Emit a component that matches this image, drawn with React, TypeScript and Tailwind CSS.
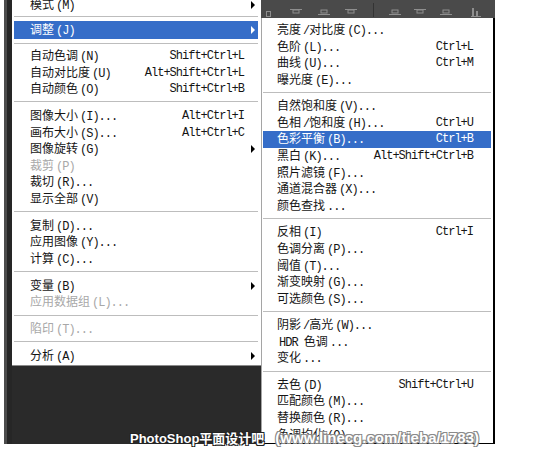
type Row =
  | { sep: true; h?: number; line?: number }
  | { label: string; sc?: string; arrow?: boolean; off?: boolean; hl?: boolean };

const leftMenu: Row[] = [
  { label: "模式(M)", arrow: true },
  { sep: true, h: 7.4, line: 2 },
  { label: "调整(J)", arrow: true, hl: true },
  { sep: true, h: 8.7, line: 4 },
  { label: "自动色调(N)", sc: "Shift+Ctrl+L" },
  { label: "自动对比度(U)", sc: "Alt+Shift+Ctrl+L" },
  { label: "自动颜色(O)", sc: "Shift+Ctrl+B" },
  { sep: true },
  { label: "图像大小(I)...", sc: "Alt+Ctrl+I" },
  { label: "画布大小(S)...", sc: "Alt+Ctrl+C" },
  { label: "图像旋转(G)", arrow: true },
  { label: "裁剪(P)", off: true },
  { label: "裁切(R)..." },
  { label: "显示全部(V)" },
  { sep: true },
  { label: "复制(D)..." },
  { label: "应用图像(Y)..." },
  { label: "计算(C)..." },
  { sep: true },
  { label: "变量(B)", arrow: true },
  { label: "应用数据组(L)...", off: true },
  { sep: true },
  { label: "陷印(T)...", off: true },
  { sep: true },
  { label: "分析(A)", arrow: true },
];

const subMenu: Row[] = [
  { label: "亮度/对比度(C)..." },
  { label: "色阶(L)...", sc: "Ctrl+L" },
  { label: "曲线(U)...", sc: "Ctrl+M" },
  { label: "曝光度(E)..." },
  { sep: true },
  { label: "自然饱和度(V)..." },
  { label: "色相/饱和度(H)...", sc: "Ctrl+U" },
  { label: "色彩平衡(B)...", sc: "Ctrl+B", hl: true },
  { label: "黑白(K)...", sc: "Alt+Shift+Ctrl+B" },
  { label: "照片滤镜(F)..." },
  { label: "通道混合器(X)..." },
  { label: "颜色查找..." },
  { sep: true },
  { label: "反相(I)", sc: "Ctrl+I" },
  { label: "色调分离(P)..." },
  { label: "阈值(T)..." },
  { label: "渐变映射(G)..." },
  { label: "可选颜色(S)..." },
  { sep: true },
  { label: "阴影/高光(W)..." },
  { label: "HDR 色调..." },
  { label: "变化..." },
  { sep: true },
  { label: "去色(D)", sc: "Shift+Ctrl+U" },
  { label: "匹配颜色(M)..." },
  { label: "替换颜色(R)..." },
  { label: "色调均化(Q)" },
];

const cjk = /([\u3400-\u9fff]+)/;

function Label({ text }: { text: string }) {
  const parts = text.split(cjk).filter(Boolean);
  return (
    <span className="flex items-baseline whitespace-pre">
      {parts.map((p, i) =>
        cjk.test(p) ? (
          <span key={i} className="font-['Noto_Sans_CJK_SC',sans-serif] text-[12px]">
            {p}
          </span>
        ) : (
          <span
            key={i}
            className="ml-[2px] font-['Liberation_Mono',monospace] text-[12px] tracking-[-1px]"
          >
            {p}
          </span>
        )
      )}
    </span>
  );
}

function Menu({ rows, padL, padR }: { rows: Row[]; padL: string; padR: string }) {
  return (
    <>
      {rows.map((r, i) => {
        if ("sep" in r) {
          return (
            <div key={i} style={{ height: r.h ?? 10.2, paddingTop: r.line ?? 4 }}>
              <div className="h-px bg-[#bdbdbd]" />
            </div>
          );
        }
        const color = r.hl ? "bg-[#356dc8] text-white" : r.off ? "text-[#a8a8a8]" : "text-[#151515]";
        return (
          <div
            key={i}
            className={`flex shrink-0 items-center leading-none ${padL} ${color} ${
              r.hl && r.arrow ? "h-[18px]" : "h-[16.6px]"
            }`}
          >
            <Label text={r.label} />
            {r.sc && (
              <span
                className={`ml-auto font-['Liberation_Mono',monospace] text-[12px] tracking-[-1px] ${padR}`}
              >
                {r.sc}
              </span>
            )}
            {r.arrow && (
              <span
                className={`ml-auto mr-[3px] h-0 w-0 border-y-[4px] border-l-[4px] border-y-transparent ${
                  r.hl ? "border-l-white" : "border-l-black"
                }`}
              />
            )}
          </div>
        );
      })}
    </>
  );
}

function AlignIcon({ flip }: { flip?: boolean }) {
  return (
    <svg width="12" height="10" viewBox="0 0 12 10" className="shrink-0">
      <rect x="0" y={flip ? 7 : 2} width="12" height="1" fill="#8e8e8e" />
      <rect x="3" y="3" width="6" height="3" fill="none" stroke="#8e8e8e" strokeWidth="1" />
    </svg>
  );
}

export default function App() {
  return (
    <div className="relative h-[456px] w-[538px] overflow-hidden bg-white">
      <div className="ml-[4px] flex h-[444px] w-[491px] bg-[#2a2a2a]">
        {/* ruler strip */}
        <div className="flex w-[8px] shrink-0">
          <div className="w-[3px] bg-[#4c4c4c]" />
          <div className="flex-1 bg-[#262626]" />
        </div>

        {/* main menu */}
        <div className="flex w-[249px] shrink-0 flex-col">
          <div className="flex h-[366px] flex-col overflow-hidden border-b border-[#8a8a8a] bg-white pl-[2px] pr-[3px]">
            <div className="-mt-[3px]" />
            <Menu rows={leftMenu} padL="pl-[16px]" padR="pr-[14px]" />
          </div>
        </div>

        {/* toolbar + submenu */}
        <div className="flex w-[234px] shrink-0 flex-col">
          <div className="flex h-[18px] shrink-0 items-end bg-[#4a4a4a] pb-[1px] pr-[2px]">
            <span className="ml-[5px] h-[6px] w-[5px] border border-[#8e8e8e]" />
            <span className="ml-[19px]"><AlignIcon /></span>
            <span className="ml-[16px]"><AlignIcon flip /></span>
            <span className="ml-[15px]"><AlignIcon /></span>
            <span className="ml-[16px] h-[14px] w-px bg-[#333]" />
            <span className="ml-[15px]"><AlignIcon flip /></span>
            <span className="ml-[13px]"><AlignIcon /></span>
            <span className="ml-[14px]"><AlignIcon flip /></span>
            <svg width="10" height="10" viewBox="0 0 10 10" className="ml-[19px]">
              <rect x="1" y="1" width="2" height="9" fill="#8e8e8e" />
              <rect x="5" y="4" width="2" height="6" fill="#8e8e8e" />
              <rect x="0" y="9" width="10" height="1" fill="#8e8e8e" />
            </svg>
          </div>
          <div className="flex flex-1 flex-col overflow-hidden border-b border-l border-r-2 border-b-black border-l-[#a5a5a5] border-r-black bg-white pl-[1px] pr-[2px] pt-[3.7px]">
            <Menu rows={subMenu} padL="pl-[14px]" padR="pr-[18px]" />
          </div>
        </div>
      </div>

      {/* watermark */}
      <div className="absolute left-[130px] top-[430px] flex items-baseline whitespace-pre font-['Liberation_Sans','Noto_Sans_CJK_SC',sans-serif] font-bold leading-[16px]">
        <span className="text-[13px] text-white [text-shadow:1px_1px_0_#222,-1px_-1px_0_#222,1px_-1px_0_#222,-1px_1px_0_#222]">
          PhotoShop平面设计吧
        </span>
        <span className="ml-[11px] text-[15px] text-white [text-shadow:1px_1px_0_#8a8a8a,-1px_-1px_0_#8a8a8a,1px_-1px_0_#8a8a8a,-1px_1px_0_#8a8a8a]">
          (www.linecg.com/tieba/1783)
        </span>
      </div>
    </div>
  );
}
